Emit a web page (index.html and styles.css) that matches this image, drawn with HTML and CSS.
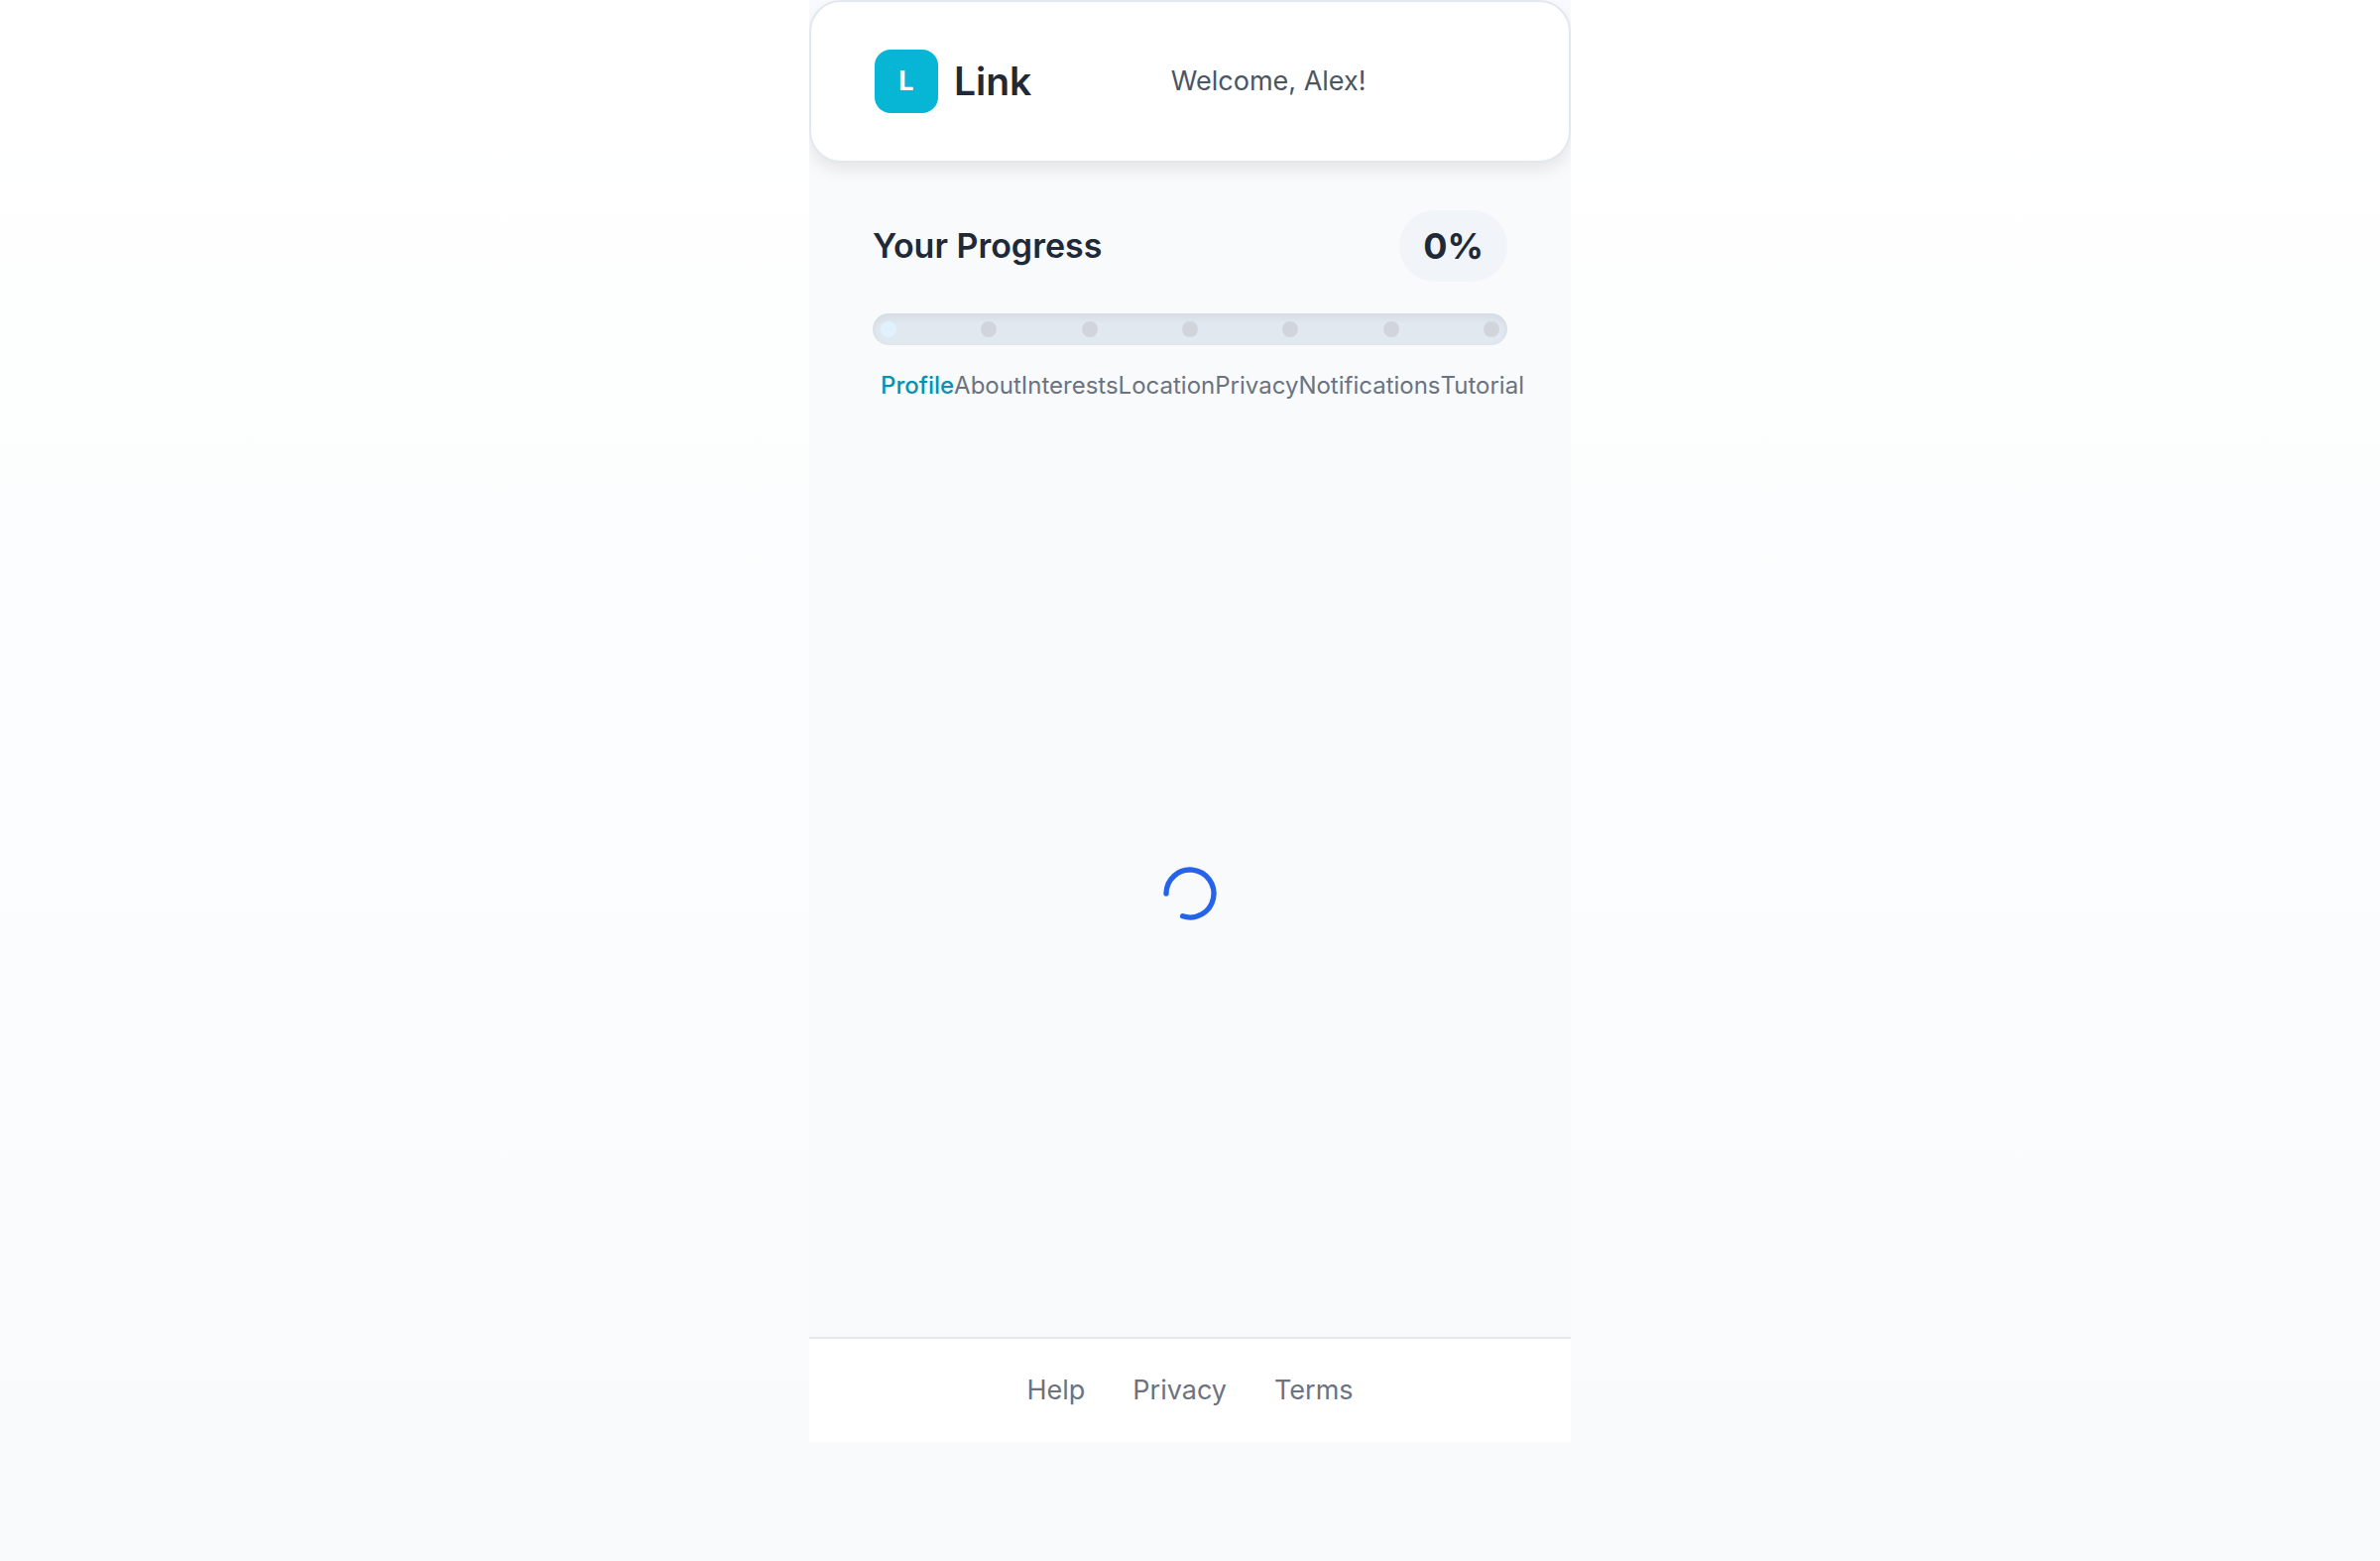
FILE: index.html
```html
<!DOCTYPE html>
<html lang="en">
<head>
<meta charset="utf-8">
<meta name="viewport" content="width=device-width, initial-scale=1">
<title>Link</title>
<link rel="stylesheet" href="styles.css">
</head>
<body>
<div class="shell">
  <header class="header">
    <div class="brand">
      <span class="brand-mark">L</span>
      <span class="brand-name">Link</span>
    </div>
    <p class="welcome">Welcome, Alex!</p>
    <div class="header-actions"></div>
  </header>
  <section class="progress">
    <div class="progress-head">
      <h1 class="progress-title">Your Progress</h1>
      <span class="progress-value">0%</span>
    </div>
    <div class="track" role="progressbar" aria-label="Your Progress" aria-valuenow="0" aria-valuemin="0" aria-valuemax="100">
      <span class="dot dot-current"></span>
      <span class="dot"></span>
      <span class="dot"></span>
      <span class="dot"></span>
      <span class="dot"></span>
      <span class="dot"></span>
      <span class="dot"></span>
    </div>
    <ol class="steps">
      <li class="step step-current">Profile</li>
      <li class="step">About</li>
      <li class="step">Interests</li>
      <li class="step">Location</li>
      <li class="step">Privacy</li>
      <li class="step">Notifications</li>
      <li class="step">Tutorial</li>
    </ol>
  </section>
  <main class="content">
    <svg class="spinner" viewBox="0 0 24 24" role="img" aria-label="Loading">
      <path d="M3 12a9 9 0 1 1 6.219 8.56"/>
    </svg>
  </main>
  <footer class="footer">
    <a class="footer-link" href="#">Help</a>
    <a class="footer-link" href="#">Privacy</a>
    <a class="footer-link" href="#">Terms</a>
  </footer>
</div>
</body>
</html>
```
FILE: styles.css
```css
* {
  box-sizing: border-box;
  margin: 0;
  padding: 0;
}

body {
  display: flex;
  flex-direction: column;
  align-items: center;
  min-height: 100vh;
  padding-bottom: 120px;
  background: linear-gradient(#ffffff, #f8fafc);
  font-family: Inter, "Liberation Sans", sans-serif;
  font-size: 27px;
  line-height: 40px;
  color: #1f2937;
}

.shell {
  display: flex;
  flex-direction: column;
  flex: 1;
  width: 100%;
  max-width: 768px;
  background: #f8fafc;
  overflow: hidden;
}

.header {
  display: flex;
  align-items: center;
  justify-content: space-between;
  padding: 48px 64px;
  background: #ffffff;
  border: 2px solid #e2e8f0;
  border-radius: 32px;
  box-shadow: 0 8px 16px rgba(0, 0, 0, 0.08);
}

.brand {
  display: flex;
  align-items: center;
  gap: 16px;
}

.brand-mark {
  display: grid;
  place-items: center;
  width: 64px;
  height: 64px;
  border-radius: 16px;
  background: #06b6d4;
  color: #ffffff;
  font-weight: 700;
}

.brand-name {
  font-size: 39px;
  font-weight: 600;
}

.welcome {
  color: #4b5563;
}

.progress {
  padding: 48px 64px;
}

.progress-head {
  display: flex;
  align-items: center;
  justify-content: space-between;
  margin-bottom: 32px;
}

.progress-title {
  font-size: 34px;
  font-weight: 600;
}

.progress-value {
  padding: 16px 24px;
  border-radius: 36px;
  background: #f1f5f9;
  font-size: 36px;
  font-weight: 700;
}

.track {
  display: flex;
  align-items: center;
  justify-content: space-between;
  height: 32px;
  padding: 0 8px;
  border-radius: 16px;
  background: #e2e8f0;
  box-shadow: inset 0 4px 8px rgba(0, 0, 0, 0.06);
}

.dot {
  width: 16px;
  height: 16px;
  border-radius: 50%;
  background: #d1d5db;
}

.dot-current {
  background: #e0f2fe;
}

.steps {
  display: flex;
  justify-content: space-between;
  margin-top: 24px;
  padding: 0 8px;
  list-style: none;
  font-size: 24px;
  line-height: 34px;
  color: #6b7280;
}

.step-current {
  color: #0891b2;
  font-weight: 500;
}

.content {
  display: grid;
  place-items: center;
  flex: 1;
}

.spinner {
  width: 64px;
  height: 64px;
  fill: none;
  stroke: #2563eb;
  stroke-width: 2;
  stroke-linecap: round;
}

.footer {
  display: flex;
  justify-content: center;
  gap: 48px;
  padding: 32px;
  background: #ffffff;
  border-top: 2px solid #e2e8f0;
}

.footer-link {
  color: #6b7280;
  text-decoration: none;
}
```
